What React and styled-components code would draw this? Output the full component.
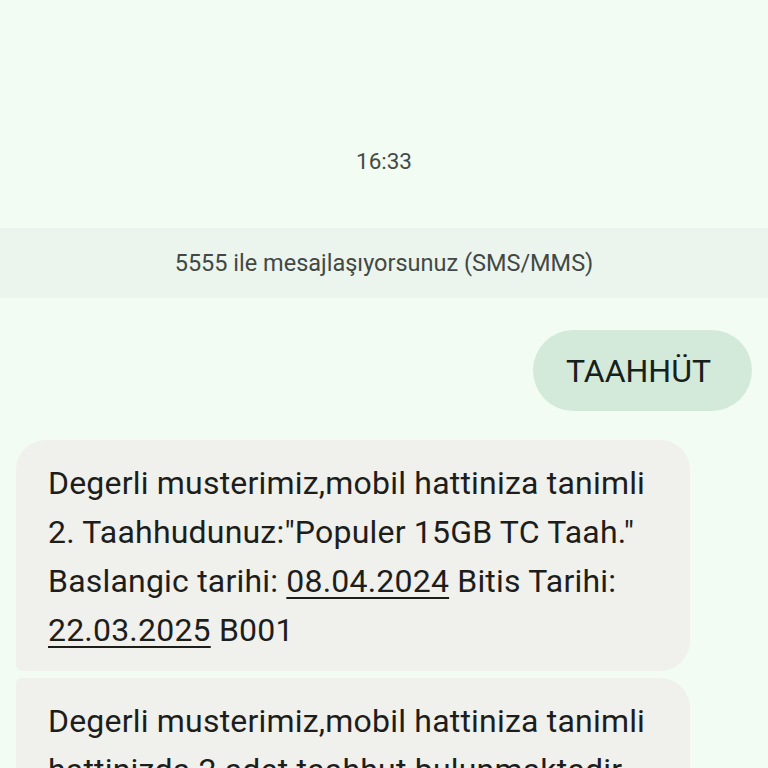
import React from 'react';
import styled, { createGlobalStyle } from 'styled-components';

const GlobalStyle = createGlobalStyle`
  html, body {
    margin: 0;
    padding: 0;
    background: #f2fcf2;
  }
  body {
    font-family: Roboto, "Noto Sans", "DejaVu Sans", sans-serif;
    -webkit-font-smoothing: antialiased;
  }
`;

const Screen = styled.div`
  width: 768px;
  height: 768px;
  overflow: hidden;
  background: #f2fcf2;
  display: flex;
  flex-direction: column;
`;

const Timestamp = styled.div`
  flex-shrink: 0;
  padding: 146px 0 52px;
  text-align: center;
  font-size: 22.5px;
  line-height: 30px;
  color: #454a46;
`;

const InfoBand = styled.div`
  flex-shrink: 0;
  height: 70px;
  background: #ebf5ed;
  display: flex;
  align-items: center;
  justify-content: center;
  font-size: 23.5px;
  color: #434845;
`;

const Thread = styled.div`
  flex-shrink: 0;
  display: flex;
  flex-direction: column;
  padding: 32px 16px 0 16px;
`;

const Row = styled.div`
  display: flex;
  justify-content: ${(p) => (p.$out ? 'flex-end' : 'flex-start')};
  margin-bottom: ${(p) => p.$gap || 0}px;
`;

const OutBubble = styled.div`
  background: #d3eadb;
  color: #17201a;
  border-radius: 41px;
  height: 81px;
  box-sizing: border-box;
  padding: 0 41px 0 33px;
  display: flex;
  align-items: center;
  font-size: 32px;
`;

const InBubble = styled.div`
  background: #f0f0ec;
  color: #1d1e1c;
  width: 674px;
  box-sizing: border-box;
  padding: 19px 32px 16px 32px;
  font-size: 32px;
  line-height: 49px;
  letter-spacing: 0.2px;
  border-radius: ${(p) => (p.$first ? '30px 30px 30px 6px' : '6px 30px 30px 30px')};
`;

const Link = styled.span`
  text-decoration: underline;
  text-decoration-thickness: 2px;
  text-underline-offset: 5px;
`;

export default function App() {
  return (
    <Screen>
      <GlobalStyle />
      <Timestamp>16:33</Timestamp>
      <InfoBand>5555 ile mesajlaşıyorsunuz (SMS/MMS)</InfoBand>
      <Thread>
        <Row $out $gap={29}>
          <OutBubble>TAAHHÜT</OutBubble>
        </Row>
        <Row $gap={7}>
          <InBubble $first>
            Degerli musterimiz,mobil hattiniza tanimli 2. Taahhudunuz:"Populer 15GB TC Taah."
            Baslangic tarihi: <Link>08.04.2024</Link> Bitis Tarihi: <Link>22.03.2025</Link> B001
          </InBubble>
        </Row>
        <Row>
          <InBubble>
            Degerli musterimiz,mobil hattiniza tanimli hattinizda 2 adet taahhut bulunmaktadir.
          </InBubble>
        </Row>
      </Thread>
    </Screen>
  );
}
